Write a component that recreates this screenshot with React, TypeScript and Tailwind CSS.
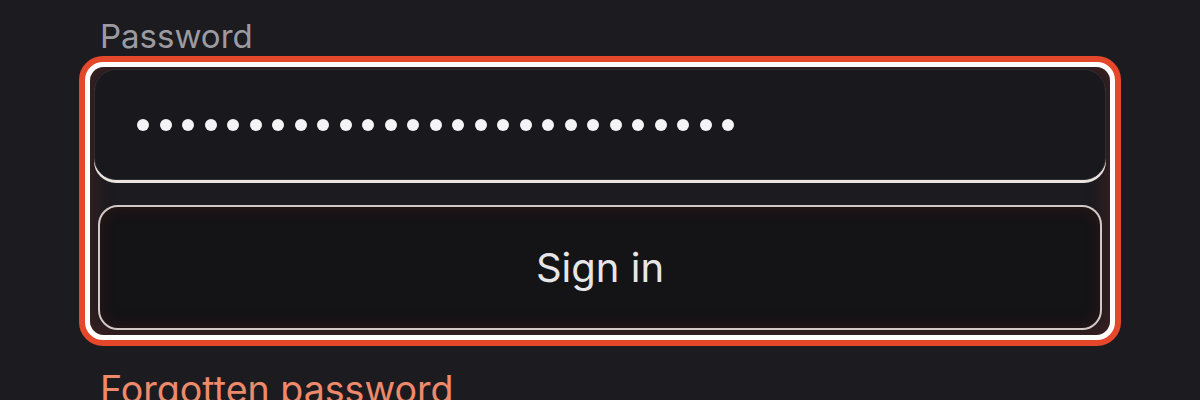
export default function App() {
  const dots = Array.from({ length: 27 });

  return (
    <div className="h-[400px] w-[1200px] overflow-hidden bg-[#1c1b20] px-[79px] font-['Inter',sans-serif]">
      <label className="block pl-[21px] pt-[16px] text-[33px] leading-[40px] text-[#9b9ba1]">
        Password
      </label>
      <div className="rounded-[24px] border-[6px] border-[#e4472a] bg-white p-[5px]">
        <div className="flex flex-col rounded-[14px] bg-[#1c1b20] px-[4px] pb-[5px] pt-[2px] shadow-[inset_0_0_22px_rgba(110,40,32,0.55)]">
          <div className="flex h-[111px] items-center gap-[10.5px] rounded-[22px] border-[1.5px] border-[#2e2d33] bg-[#19181d] pl-[42px] shadow-[0_3px_0_#ece4e0]">
            {dots.map((_, i) => (
              <span key={i} className="h-[12px] w-[12px] rounded-full bg-[#f4f4f6]" />
            ))}
          </div>
          <button className="mx-[4px] mt-[25px] h-[125px] rounded-[20px] border-2 border-[#d2c9c6] bg-[#141316] text-[40px] text-[#e6e6e8] shadow-[inset_0_0_16px_rgba(90,35,30,0.35)]">
            Sign in
          </button>
        </div>
      </div>
      <a className="block pl-[21px] pt-[21px] text-[37.6px] leading-[46px] text-[#ee8a6c]">
        Forgotten password
      </a>
    </div>
  );
}
